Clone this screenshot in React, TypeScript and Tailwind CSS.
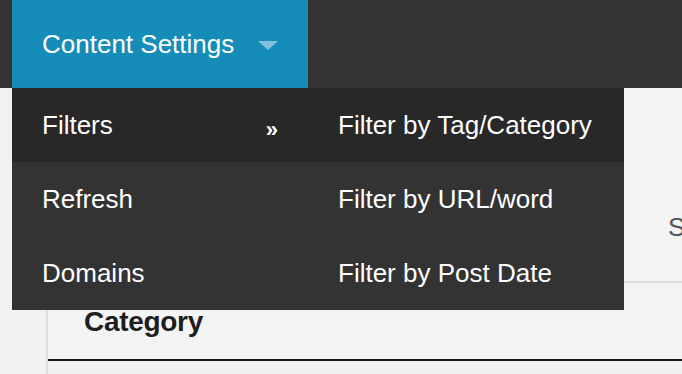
import { useState } from "react";

const MAIN_ITEMS = ["Filters", "Refresh", "Domains"] as const;
const FILTER_ITEMS = [
  "Filter by Tag/Category",
  "Filter by URL/word",
  "Filter by Post Date",
];

export default function App() {
  const [active] = useState(0);

  return (
    <div
      className="relative h-[374px] w-[682px] overflow-hidden bg-[#f2f2f2] text-white"
      style={{ fontFamily: '"Liberation Sans", Arial, sans-serif' }}
    >
      {/* Top bar */}
      <header className="flex h-[88px] bg-[#333333] pl-[12px]">
        <button className="flex w-[296px] items-center bg-[#168cb9] pl-[30px] text-[26px] leading-none">
          Content Settings
          <span className="ml-[24px] mt-[2px] h-0 w-0 border-x-[10px] border-t-[9px] border-x-transparent border-t-[#80c1dc]" />
        </button>
      </header>

      {/* Page body */}
      <main className="flex h-[286px] pl-[46px]">
        <div className="flex flex-1 flex-col border-l-2 border-[#dedede] bg-[#f4f4f4]">
          <div className="flex h-[195px] items-center border-b-2 border-[#dcdcdc] pl-[620px] text-[26px] text-[#555]">
            <span className="mt-[85px] whitespace-nowrap">Settings</span>
          </div>
          <div className="flex h-[78px] items-center border-b-2 border-[#151515] pl-[36px] pt-[2px] text-[28px] font-bold tracking-[-0.3px] text-[#1e1e1e]">
            Category
          </div>
          <div className="flex-1 bg-[#f0f0f0]" />
        </div>
      </main>

      {/* Dropdown */}
      <div className="absolute left-[12px] top-[88px] flex w-[612px] flex-col bg-[#333333] text-[26px]">
        {MAIN_ITEMS.map((label, i) => (
          <div
            key={label}
            className={`flex h-[74px] items-center ${
              i === active ? "bg-[#282828]" : ""
            }`}
          >
            <div className="flex w-[296px] items-center justify-between pl-[30px] pr-[30px]">
              <span>{label}</span>
              {i === active && (
                <span className="mt-[10px] text-[22px] font-bold leading-none">»</span>
              )}
            </div>
            <span className="pl-[30px]">{FILTER_ITEMS[i]}</span>
          </div>
        ))}
      </div>
    </div>
  );
}
